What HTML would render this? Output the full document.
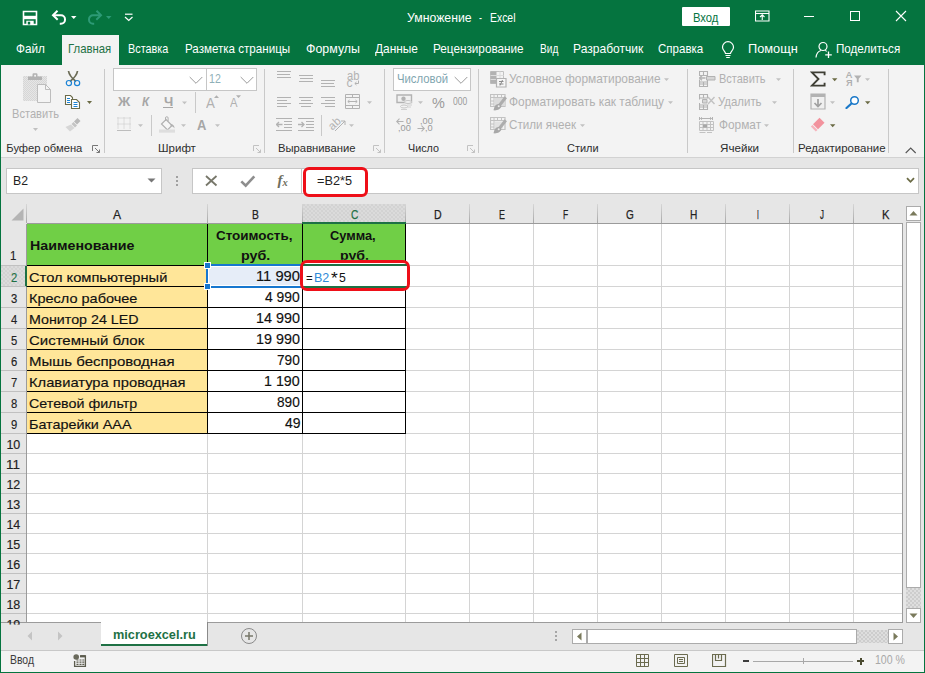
<!DOCTYPE html>
<html lang="ru"><head><meta charset="utf-8"><title>Умножение - Excel</title>
<style>
html,body{margin:0;padding:0;background:#fff;}
body{width:925px;height:673px;overflow:hidden;font-family:"Liberation Sans",sans-serif;}
#win{position:relative;width:925px;height:673px;overflow:hidden;background:#e6e6e6;}
#win div,#win svg,#win span{position:absolute;box-sizing:border-box;}
.t{white-space:pre;line-height:1;transform-origin:0 0;font-family:"Liberation Sans",sans-serif;}
.g{background:#05743f;}
.sep{width:1px;background:#c9c9c9;}
.box{background:#fff;border:1px solid #c6c6c6;}
.vl{width:1px;background:#d4d4d4;top:224px;height:398px;}
.hl{height:1px;background:#d4d4d4;left:27px;width:875px;}
.hs{width:1px;background:linear-gradient(#d6d6d6,#a8a8a8);top:204px;height:19px;}
.rs{height:1px;background:#c0c0c0;left:1px;width:25px;}
.bk{background:#000;}
.dot{background-color:#dbdbdb;background-image:radial-gradient(circle at 1px 1px,#cecece 0.6px,transparent 0.9px),radial-gradient(circle at 3px 3px,#cecece 0.6px,transparent 0.9px);background-size:4px 4px;}
.hatch{background-color:#dedede;background-image:radial-gradient(circle at 1px 1px,#cdcdcd 0.7px,transparent 1px),radial-gradient(circle at 3px 3px,#cdcdcd 0.7px,transparent 1px);background-size:4px 4px;}

</style></head>
<body>
<div id="win">
<!-- title + tab strip -->
<div class="g" style="left:0;top:0;width:925px;height:65px;"></div>
<div style="left:62px;top:35px;width:57px;height:31px;background:#f3f3f3;"></div>
<div style="left:682px;top:7px;width:48px;height:19px;background:#fff;border-radius:1px;"></div>
<!-- ribbon -->
<div style="left:1px;top:65px;width:923px;height:92px;background:#f3f3f3;"></div>
<div style="left:1px;top:157px;width:923px;height:1px;background:#d2d2d2;"></div>
<!-- window borders -->
<div class="g" style="left:0;top:0;width:1px;height:673px;"></div>
<div class="g" style="left:924px;top:0;width:1px;height:673px;"></div>
<div class="g" style="left:0;top:672px;width:925px;height:1px;"></div>
<!-- QAT -->
<svg style="left:22px;top:10px" width="16" height="16" viewBox="0 0 16 16"><path d="M1.500 1.500h13v13h-13z" fill="none" stroke="#fff" stroke-width="1.600"/><path d="M1.500 5.800h13v3.400h-13z" fill="#fff"/><path d="M4.300 10.800h7.400v3.700h-7.400z" fill="#fff"/><path d="M5.800 11.800h2.400v2.700h-2.400z" fill="#05743f"/></svg>
<svg style="left:51px;top:9px" width="17" height="16" viewBox="0 0 17 16"><path d="M6.500 1.800L2 6.300l4.700 4.500" fill="none" stroke="#fff" stroke-width="2"/><path d="M2.500 6.300h7.500a4 4 0 0 1 4 4v0.400a4 4 0 0 1-4 4h-1.200" fill="none" stroke="#fff" stroke-width="2"/></svg>
<svg style="left:71px;top:16px" width="6" height="4"><path d="M0 0h5.500l-2.750 3z" fill="#fff"/></svg>
<svg style="left:86px;top:9px" width="17" height="16" viewBox="0 0 17 16"><path d="M10.500 1.800L15 6.300l-4.700 4.500" fill="none" stroke="#2d9a76" stroke-width="2"/><path d="M14.500 6.300h-7.500a4 4 0 0 0-4 4v0.400a4 4 0 0 0 4 4h1.200" fill="none" stroke="#2d9a76" stroke-width="2"/></svg>
<svg style="left:106px;top:16px" width="6" height="4"><path d="M0 0h5.500l-2.750 3z" fill="#2d9a76"/></svg>
<svg style="left:124px;top:13px" width="10" height="9"><path d="M1 1.200h7.500" stroke="#fff" stroke-width="1.200"/><path d="M1 4l3.750 3.500l3.750-3.500" fill="none" stroke="#fff" stroke-width="1.200"/></svg>
<!-- window controls -->
<svg style="left:755px;top:10px" width="15" height="12"><path d="M0.500 1h13.500v10h-13.500z" fill="none" stroke="#fff" stroke-width="1.100"/><path d="M0.500 3.500h13.500" stroke="#fff" stroke-width="1.100"/><path d="M7.250 10v-5M5 7l2.250-2.200l2.250 2.200" fill="none" stroke="#fff" stroke-width="1.100"/></svg>
<div style="left:804px;top:16px;width:10px;height:1px;background:#fff;"></div>
<div style="left:850px;top:11px;width:10px;height:10px;border:1px solid #fff;"></div>
<svg style="left:895px;top:10px" width="12" height="12"><path d="M1 1l10 10M11 1l-10 10" stroke="#fff" stroke-width="1.100"/></svg>
<!-- bulb + share -->
<svg style="left:721px;top:41px" width="14" height="18" viewBox="0 0 14 18"><path d="M4.500 12.500c0-2-3-3-3-6.300a5.500 5.500 0 0 1 11 0c0 3.300-3 4.300-3 6.300z" fill="none" stroke="#fff" stroke-width="1.200"/><path d="M4.500 14.500h5M5.200 16.500h3.600" stroke="#fff" stroke-width="1.200"/></svg>
<svg style="left:815px;top:41px" width="18" height="18" viewBox="0 0 18 18"><circle cx="8" cy="5.500" r="4" fill="none" stroke="#fff" stroke-width="1.200"/><path d="M1 16.500c0.500-4.500 3-6.500 5-7M10 9.500c0.700 0.200 1.300 0.500 1.800 0.900" fill="none" stroke="#fff" stroke-width="1.200"/><path d="M13.500 10.500v6.500M10.200 13.800h6.600" stroke="#fff" stroke-width="1.300"/></svg>
<!-- clipboard group -->
<svg style="left:22px;top:72px" width="30" height="32" viewBox="0 0 30 32"><defs><pattern id="hx" width="2" height="2" patternUnits="userSpaceOnUse"><rect width="2" height="2" fill="#e6e6e6"/><rect width="1" height="1" fill="#d6d6d6"/><rect x="1" y="1" width="1" height="1" fill="#d6d6d6"/></pattern></defs><rect x="1" y="4" width="24" height="25" fill="url(#hx)"/><path d="M6 8v-3.500h4.500v-2a1.200 1.200 0 0 1 1.200-1.200h2.600a1.200 1.200 0 0 1 1.200 1.200v2h4.500v3.500z" fill="#b3b3b3"/><rect x="12.200" y="2.800" width="1.800" height="1.800" fill="#f3f3f3"/><path d="M15.500 12.500h8l5 5v13h-13z" fill="#f4f4f4" stroke="#bdbdbd" stroke-width="1"/><path d="M23.500 12.500v5h5" fill="none" stroke="#bdbdbd" stroke-width="1"/></svg>
<svg style="left:33px;top:128px" width="6" height="4"><path d="M0 0h5l-2.500 3z" fill="#c0c0c0"/></svg>
<svg style="left:65px;top:70px" width="16" height="17" viewBox="0 0 16 17"><path d="M3.500 1c0.500 3.500 2.500 6.500 7.500 10.500M12.500 1c-0.500 3.500-2.500 6.500-7.500 10.500" fill="none" stroke="#6b6b55" stroke-width="1.700"/><circle cx="3.900" cy="13.100" r="2.600" fill="none" stroke="#1c84d6" stroke-width="1.200"/><circle cx="12.100" cy="13.100" r="2.600" fill="none" stroke="#1c84d6" stroke-width="1.200"/></svg>
<svg style="left:64px;top:94px" width="17" height="16" viewBox="0 0 17 16"><path d="M1.500 1.500h5l2 2v7h-7z" fill="#fff" stroke="#6b6b4a" stroke-width="1.100"/><path d="M3 4.500h3M3 6.500h3M3 8.500h3" stroke="#1c84d6" stroke-width="1"/><path d="M7.500 5.500h5l3 3v6h-8z" fill="#fff" stroke="#6b6b4a" stroke-width="1.100"/><path d="M9.500 8.500h4M9.500 10.500h4M9.500 12.500h4" stroke="#1c84d6" stroke-width="1"/></svg>
<svg style="left:87px;top:101px" width="6" height="4"><path d="M0 0h5l-2.500 3z" fill="#6b6b45"/></svg>
<svg style="left:65px;top:117px" width="17" height="15" viewBox="0 0 17 15"><path d="M12.500 1l3 3-3.500 3.500-3-3z" fill="#b9b9b9"/><path d="M8.500 5l3.500 3.500-2 2-3.500-3.500z" fill="#c4c4c4"/><path d="M6 7.500l3.500 3.500-4.500 3.500-4.500-4.500z" fill="#d6d6d6"/></svg>
<svg style="left:92px;top:145px" width="9" height="9" viewBox="0 0 9 9"><path d="M0.500 6v-5.500h5.500" fill="none" stroke="#777" stroke-width="1"/><path d="M3 3l4.500 4.500M7.500 4.500v3h-3" fill="none" stroke="#777" stroke-width="1"/></svg>
<div class="sep" style="left:104px;top:69px;height:84px;"></div>
<!-- font group -->
<div class="box" style="left:113px;top:68px;width:94px;height:23px;"></div>
<div class="box" style="left:206px;top:68px;width:51px;height:23px;"></div>
<svg style="left:189px;top:76px" width="15" height="9"><path d="M0.700 1l6.300 6.300l6.300-6.300" fill="none" stroke="#9a9a9a" stroke-width="1"/></svg>
<svg style="left:240px;top:76px" width="15" height="9"><path d="M0.700 1l6.300 6.300l6.300-6.300" fill="none" stroke="#9a9a9a" stroke-width="1"/></svg>
<div style="left:163px;top:107px;width:10px;height:1px;background:#a6a6a6;"></div>
<svg style="left:182px;top:101px" width="6" height="4"><path d="M0 0.500h5l-2.500 2.800z" fill="#c2c2c2"/></svg>
<div class="sep" style="left:195px;top:92px;height:21px;"></div>
<svg style="left:214px;top:95px" width="6" height="4"><path d="M0 3h5l-2.500-2.800z" fill="#b0b0b0"/></svg>
<svg style="left:236px;top:95px" width="6" height="4"><path d="M0 0.200h5l-2.500 2.800z" fill="#b0b0b0"/></svg>
<svg style="left:117px;top:117px" width="14" height="15" viewBox="0 0 14 15"><path d="M0.500 1h13M0.500 7h13M1 0.500v12M7 0.500v12M13 0.500v12" fill="none" stroke="#c4c4c4" stroke-width="1" stroke-dasharray="1 1"/><path d="M0 13.500h14" stroke="#bdbdbd" stroke-width="1"/></svg>
<svg style="left:138px;top:124px" width="6" height="4"><path d="M0 0.200h5l-2.500 2.800z" fill="#c2c2c2"/></svg>
<div class="sep" style="left:151px;top:115px;height:21px;"></div>
<svg style="left:159px;top:116px" width="17" height="18" viewBox="0 0 17 18"><path d="M7 3.500l6 6-4.500 4.500-6-6z" fill="#f6f6f6" stroke="#b0b0b0" stroke-width="1.200"/><path d="M6.500 5v-3a1.300 1.300 0 0 1 2.600 0v3" fill="none" stroke="#b0b0b0" stroke-width="1"/><path d="M12 8c2.500 0.500 3.500 2 3.500 4.500c-1-1.500-2-2.500-4-2.500z" fill="#b0b0b0"/><rect x="0" y="13.500" width="16" height="3.200" fill="#dedede"/></svg>
<svg style="left:181px;top:124px" width="6" height="4"><path d="M0 0.200h5l-2.500 2.800z" fill="#c2c2c2"/></svg>
<svg style="left:215px;top:124px" width="6" height="4"><path d="M0 0.200h5l-2.500 2.800z" fill="#c2c2c2"/></svg>
<svg style="left:253px;top:145px" width="9" height="9" viewBox="0 0 9 9"><path d="M0.500 6v-5.500h5.500" fill="none" stroke="#c2c2c2" stroke-width="1"/><path d="M3 3l4.500 4.500M7.500 4.500v3h-3" fill="none" stroke="#c2c2c2" stroke-width="1"/></svg>
<div class="sep" style="left:264px;top:69px;height:84px;"></div>
<!-- alignment group -->
<div style="left:277px;top:71px;width:14px;height:1px;background:#b2b2b2;"></div><div style="left:277px;top:74px;width:13px;height:1px;background:#b2b2b2;"></div><div style="left:277px;top:77px;width:14px;height:1px;background:#b2b2b2;"></div>
<div style="left:299px;top:75px;width:14px;height:1px;background:#b2b2b2;"></div><div style="left:299.5px;top:78px;width:13px;height:1px;background:#b2b2b2;"></div><div style="left:299px;top:81px;width:14px;height:1px;background:#b2b2b2;"></div>
<div style="left:321px;top:80px;width:14px;height:1px;background:#b2b2b2;"></div><div style="left:321px;top:83px;width:13px;height:1px;background:#b2b2b2;"></div><div style="left:321px;top:86px;width:14px;height:1px;background:#b2b2b2;"></div>
<div style="left:277px;top:97px;width:14px;height:1px;background:#b2b2b2;"></div><div style="left:277px;top:100px;width:10px;height:1px;background:#b2b2b2;"></div><div style="left:277px;top:103px;width:14px;height:1px;background:#b2b2b2;"></div><div style="left:277px;top:106px;width:10px;height:1px;background:#b2b2b2;"></div>
<div style="left:299px;top:97px;width:14px;height:1px;background:#b2b2b2;"></div><div style="left:301px;top:100px;width:10px;height:1px;background:#b2b2b2;"></div><div style="left:299px;top:103px;width:14px;height:1px;background:#b2b2b2;"></div><div style="left:301px;top:106px;width:10px;height:1px;background:#b2b2b2;"></div>
<div style="left:321px;top:97px;width:14px;height:1px;background:#b2b2b2;"></div><div style="left:325px;top:100px;width:10px;height:1px;background:#b2b2b2;"></div><div style="left:321px;top:103px;width:14px;height:1px;background:#b2b2b2;"></div><div style="left:325px;top:106px;width:10px;height:1px;background:#b2b2b2;"></div>
<span class="t" style="left:346.500px;top:69.500px;font-size:12px;color:#b2b2b2;transform:scaleX(.93)">ab</span>
<span class="t" style="left:346.500px;top:77.300px;font-size:12px;color:#b2b2b2;">c</span>
<svg style="left:354px;top:80px" width="6" height="6"><path d="M4.500 0.500v3h-3.500M2.500 2l-1.700 1.500l1.700 1.500" fill="none" stroke="#b2b2b2" stroke-width="1"/></svg>
<svg style="left:345px;top:94px" width="16" height="15" viewBox="0 0 16 15"><path d="M0.500 0.500h14v14h-14zM0.500 3.500h14M0.500 11.500h14M7.500 0.500v3M7.500 11.500v3" fill="none" stroke="#b2b2b2" stroke-width="1"/><path d="M3 7.500h9M4.500 6l-1.700 1.500l1.700 1.500M10.500 6l1.700 1.500l-1.700 1.500" fill="none" stroke="#b2b2b2" stroke-width="1"/></svg>
<svg style="left:367px;top:101px" width="6" height="4"><path d="M0 0.200h5l-2.500 2.800z" fill="#c2c2c2"/></svg>
<svg style="left:276px;top:118px" width="16" height="13" viewBox="0 0 16 13"><path d="M0 0.500h16M0 12.500h16M8 3.500h8M8 6.500h8M8 9.500h8" stroke="#b2b2b2" stroke-width="1"/><path d="M0.500 6.500h6M3 4l-2.500 2.500l2.500 2.500" fill="none" stroke="#b2b2b2" stroke-width="1.300"/></svg>
<svg style="left:298px;top:118px" width="16" height="13" viewBox="0 0 16 13"><path d="M0 0.500h16M0 12.500h16M8 3.500h8M8 6.500h8M8 9.500h8" stroke="#b2b2b2" stroke-width="1"/><path d="M0 6.500h6M3.500 4l2.500 2.500l-2.500 2.500" fill="none" stroke="#b2b2b2" stroke-width="1.300"/></svg>
<div class="sep" style="left:321px;top:115px;height:21px;"></div>
<span class="t" style="left:333.500px;top:120.500px;font-size:11.500px;color:#b2b2b2;transform:rotate(-42deg);transform-origin:0 100%;">ab</span>
<svg style="left:334px;top:120px" width="12" height="12"><path d="M1 11l10-10M7 1h4v4" fill="none" stroke="#b2b2b2" stroke-width="1"/></svg>
<svg style="left:349px;top:124px" width="6" height="4"><path d="M0 0.200h5l-2.500 2.800z" fill="#c2c2c2"/></svg>
<svg style="left:373px;top:145px" width="9" height="9" viewBox="0 0 9 9"><path d="M0.500 6v-5.500h5.500" fill="none" stroke="#c2c2c2" stroke-width="1"/><path d="M3 3l4.500 4.500M7.500 4.500v3h-3" fill="none" stroke="#c2c2c2" stroke-width="1"/></svg>
<div class="sep" style="left:384px;top:69px;height:84px;"></div>
<!-- number group -->
<div class="box" style="left:393px;top:68px;width:78px;height:23px;"></div>
<svg style="left:454px;top:76px" width="15" height="9"><path d="M0.700 1l6.300 6.300l6.300-6.300" fill="none" stroke="#9a9a9a" stroke-width="1"/></svg>
<svg style="left:396px;top:94px" width="17" height="16" viewBox="0 0 17 16"><path d="M1 1h14.500v7.500h-14.500z" fill="#f0f0f0" stroke="#b2b2b2" stroke-width="1.400"/><circle cx="7.500" cy="4.700" r="2.200" fill="#b2b2b2"/><ellipse cx="12" cy="8" rx="3.500" ry="1.500" fill="#f3f3f3" stroke="#c6c6c6" stroke-width="1"/><ellipse cx="8" cy="12.500" rx="3.500" ry="1.500" fill="#f3f3f3" stroke="#c6c6c6" stroke-width="1"/><path d="M11 11h5M11 13h4M5 15.500h6" stroke="#d0d0d0" stroke-width="1"/></svg>
<svg style="left:418px;top:101px" width="6" height="4"><path d="M0 0.200h5l-2.500 2.800z" fill="#c2c2c2"/></svg>
<svg style="left:396px;top:118px" width="8" height="7"><path d="M0.500 3.500h7M3.500 0.700l-2.800 2.800l2.800 2.800" fill="none" stroke="#b2b2b2" stroke-width="1.100"/></svg>
<span class="t" style="left:405.5px;top:117px;font-size:8.500px;color:#9a9a9a;transform:scaleX(1.08);">0</span>
<span class="t" style="left:397.5px;top:124.2px;font-size:8.500px;color:#9a9a9a;transform:scaleX(1.08);">,00</span>
<span class="t" style="left:419.5px;top:117px;font-size:8.500px;color:#9a9a9a;transform:scaleX(1.08);">,00</span>
<svg style="left:417px;top:125px" width="8" height="7"><path d="M0.500 3.500h7M4.500 0.700l2.800 2.800l-2.800 2.800" fill="none" stroke="#b2b2b2" stroke-width="1.100"/></svg>
<span class="t" style="left:425px;top:124.2px;font-size:8.500px;color:#9a9a9a;transform:scaleX(1.08);">,0</span>
<svg style="left:467px;top:145px" width="9" height="9" viewBox="0 0 9 9"><path d="M0.500 6v-5.500h5.500" fill="none" stroke="#c2c2c2" stroke-width="1"/><path d="M3 3l4.500 4.500M7.500 4.500v3h-3" fill="none" stroke="#c2c2c2" stroke-width="1"/></svg>
<div class="sep" style="left:478px;top:69px;height:84px;"></div>
<!-- styles group -->
<svg style="left:490px;top:71px" width="17" height="17" viewBox="0 0 17 17"><path d="M0.500 0.500h13v12h-13z" fill="#f3f3f3" stroke="#c2c2c2" stroke-width="1"/><path d="M0.500 0.500h6v12h-6z" fill="#b2b2b2"/><path d="M0.500 4.500h13M0.500 8.500h13M10 0.500v12" stroke="#dcdcdc" stroke-width="1"/><path d="M6.500 7.500h9.500v8.500h-9.500z" fill="#f6f6f6" stroke="#b2b2b2" stroke-width="1.200"/><path d="M9 10.500h4.500M9 13h4.500M12.500 9l-2.500 5.500" stroke="#8c8c8c" stroke-width="1"/></svg>
<svg style="left:490px;top:94px" width="17" height="17" viewBox="0 0 17 17"><path d="M0.500 0.500h14.500v12h-14.500z" fill="#f3f3f3" stroke="#c2c2c2" stroke-width="1.200"/><path d="M0.500 3.500h14.500M0.500 7h3.500M0.500 10h3.500M4 0.500v12M7.500 0.500v3M11.500 0.500v3" stroke="#c2c2c2" stroke-width="1"/><path d="M4.500 4h10.500v8h-10.500z" fill="#dcdcdc"/><path d="M15.800 3.200l-6.300 8" stroke="#adadad" stroke-width="3" fill="none"/><path d="M9.800 10.300c-3-1.200-5.300 0.800-6.300 6c3.200 0.500 7.500-1 8-4.200z" fill="#a8a8a8"/><circle cx="8.700" cy="12.200" r="1" fill="#ececec"/></svg>
<svg style="left:490px;top:117px" width="17" height="17" viewBox="0 0 17 17"><path d="M0.500 0.500h14.500v12h-14.500z" fill="#f3f3f3" stroke="#c2c2c2" stroke-width="1.200"/><path d="M0.500 3.500h14.500M0.500 7h3.500M0.500 10h3.500M4 0.500v12M7.500 0.500v3M11.500 0.500v3" stroke="#c2c2c2" stroke-width="1"/><path d="M5 4.500h8v7h-8z" fill="#e2e2e2"/><path d="M15.800 3.200l-6.300 8" stroke="#adadad" stroke-width="3" fill="none"/><path d="M9.800 10.300c-3-1.200-5.300 0.800-6.300 6c3.200 0.500 7.500-1 8-4.200z" fill="#a8a8a8"/><circle cx="8.700" cy="12.200" r="1" fill="#ececec"/></svg>
<svg style="left:664px;top:78px" width="6" height="4"><path d="M0 0.200h5l-2.500 2.800z" fill="#c2c2c2"/></svg>
<svg style="left:668px;top:101px" width="6" height="4"><path d="M0 0.200h5l-2.500 2.800z" fill="#c2c2c2"/></svg>
<svg style="left:580px;top:124px" width="6" height="4"><path d="M0 0.200h5l-2.500 2.800z" fill="#c2c2c2"/></svg>
<div class="sep" style="left:687px;top:69px;height:84px;"></div>
<!-- cells group -->
<svg style="left:699px;top:71px" width="17" height="16" viewBox="0 0 17 16"><path d="M0.500 0.500h8v4h-8zM4.500 0.500v4M0.500 11h8v4.500h-8zM0.500 13h8M4.500 11v4.500M0.500 8.500v2.500M8.500 8.500v2.500" fill="none" stroke="#b2b2b2" stroke-width="1.100"/><path d="M7.500 5.500h8.500v3.500h-8.500z" fill="#d6d6d6" stroke="#b2b2b2" stroke-width="1"/><path d="M0.500 7h6M3 4.800l-2.500 2.200l2.500 2.200" fill="none" stroke="#b2b2b2" stroke-width="1.300"/></svg>
<svg style="left:699px;top:94px" width="17" height="16" viewBox="0 0 17 16"><path d="M0.500 0.500h8v3.500h-8zM4.500 0.500v3.500M0.500 11h8v4.500h-8zM0.500 13h8M4.500 11v4.500M0.500 9v2M0.500 4v1.500" fill="none" stroke="#b2b2b2" stroke-width="1.100"/><path d="M3.500 5.500h4.500v3.500h-4.500z" fill="#d6d6d6" stroke="#b2b2b2" stroke-width="1"/><path d="M9 3l6.500 7M15.500 3l-6.500 7" stroke="#c2c2c2" stroke-width="1.400"/></svg>
<svg style="left:699px;top:117px" width="16" height="16" viewBox="0 0 16 16"><path d="M0.500 0v3M13.500 0v3M1.500 1.500h11M3 0.300l-1.500 1.200l1.500 1.200M11 0.300l1.500 1.200l-1.500 1.200" fill="none" stroke="#b2b2b2" stroke-width="1"/><path d="M0.500 4.500h14v9h-14zM0.500 7.500h14M0.500 10.500h14M4 4.500v9M8 4.500v9M11.500 4.500v9" fill="none" stroke="#c2c2c2" stroke-width="1"/><path d="M4 7.500h4v3h-4z" fill="#a8a8a8"/><path d="M0.500 15.500h6M8 15.500h5" stroke="#c2c2c2" stroke-width="1"/></svg>
<svg style="left:776px;top:78px" width="6" height="4"><path d="M0 0.200h5l-2.500 2.800z" fill="#c2c2c2"/></svg>
<svg style="left:772px;top:101px" width="6" height="4"><path d="M0 0.200h5l-2.500 2.800z" fill="#c2c2c2"/></svg>
<svg style="left:764px;top:124px" width="6" height="4"><path d="M0 0.200h5l-2.500 2.800z" fill="#c2c2c2"/></svg>
<div class="sep" style="left:793px;top:69px;height:84px;"></div>
<!-- editing group -->
<svg style="left:809.500px;top:70.500px" width="16" height="16" viewBox="0 0 17 17"><path d="M15.500 4.500v-3h-13.500l7 7l-7 7h13.500v-3" fill="none" stroke="#3f3f35" stroke-width="2"/></svg>
<svg style="left:832px;top:78px" width="6" height="4"><path d="M0 0.200h5.400l-2.700 3z" fill="#6b6b45"/></svg>
<span class="t" style="left:846px;top:70.500px;font-size:9px;color:#a6a6a6;-webkit-text-stroke:0.2px;">А</span><span class="t" style="left:846px;top:79px;font-size:9px;color:#a6a6a6;-webkit-text-stroke:0.2px;">Я</span>
<svg style="left:854px;top:75px" width="8" height="8"><path d="M0 0.500h7.500l-2.800 3.200v3.500h-1.900v-3.500z" fill="#b2b2b2"/></svg>
<svg style="left:865px;top:78px" width="6" height="4"><path d="M0 0.200h5l-2.500 2.800z" fill="#c2c2c2"/></svg>
<svg style="left:810px;top:93px" width="16" height="17" viewBox="0 0 16 17"><path d="M1 1h14v15h-14z" fill="#f0f0f0" stroke="#b2b2b2" stroke-width="1.200"/><path d="M1 1h14v3h-14z" fill="#b2b2b2"/><path d="M8 6v7M4.500 10l3.500 3.500l3.500-3.500" fill="none" stroke="#a0a0a0" stroke-width="1.700"/></svg>
<svg style="left:830px;top:101px" width="6" height="4"><path d="M0 0.200h5l-2.500 2.800z" fill="#c2c2c2"/></svg>
<svg style="left:845px;top:95px" width="15" height="14" viewBox="0 0 15 14"><circle cx="9.500" cy="5.500" r="3.800" fill="#fff" stroke="#1a78c8" stroke-width="1.500"/><path d="M6.500 8.500l-5 4.500" stroke="#1a78c8" stroke-width="2.200" stroke-linecap="round"/></svg>
<svg style="left:865px;top:101px" width="6" height="4"><path d="M0 0.200h5.400l-2.700 3z" fill="#6b6b45"/></svg>
<svg style="left:810px;top:117px" width="16" height="15" viewBox="0 0 16 15"><path d="M9.500 0.800l5 5-6.500 6.500-5-5z" fill="#f2929d"/><path d="M2.500 8l5 5-1.700 1.500-5-5z" fill="#f6b3bb"/></svg>
<svg style="left:830px;top:124px" width="6" height="4"><path d="M0 0.200h5.400l-2.700 3z" fill="#6b6b45"/></svg>
<div class="sep" style="left:888px;top:69px;height:84px;"></div>
<svg style="left:905px;top:147px" width="12" height="7"><path d="M0.700 6l5-5l5 5" fill="none" stroke="#555" stroke-width="1.100"/></svg>
<!-- formula bar -->
<div class="box" style="left:6px;top:168px;width:156px;height:26px;"></div>
<svg style="left:147px;top:178px" width="9" height="5"><path d="M0.5 0.5h8l-4 4z" fill="#777"/></svg>
<div style="left:176px;top:176px;width:2px;height:2px;background:#a0a0a0;"></div><div style="left:176px;top:180px;width:2px;height:2px;background:#a0a0a0;"></div><div style="left:176px;top:184px;width:2px;height:2px;background:#a0a0a0;"></div>
<div class="box" style="left:192px;top:168px;width:110px;height:26px;"></div>
<div class="box" style="left:301px;top:168px;width:618px;height:26px;"></div>
<svg style="left:205px;top:175px" width="13" height="12"><path d="M1 1l10.5 9.5M11.500 1l-10.500 9.500" stroke="#77776a" stroke-width="1.800" fill="none"/></svg>
<svg style="left:240px;top:175px" width="16" height="13"><path d="M1.300 6.300l4.400 4.400l8.600-9.300" stroke="#8e8e8e" stroke-width="2.600" fill="none"/></svg>
<span class="t" style="left:277.500px;top:172.500px;font-family:'Liberation Serif',serif;font-style:italic;font-weight:bold;font-size:15px;color:#6e6e60;">f</span><span class="t" style="left:282.500px;top:177.500px;font-family:'Liberation Serif',serif;font-style:italic;font-weight:bold;font-size:10.500px;color:#6e6e60;">x</span>
<svg style="left:906px;top:177px" width="9" height="7"><path d="M1 1.200l3.500 3.600l3.500-3.600" stroke="#6b6b45" stroke-width="1.800" fill="none"/></svg>
<div style="left:303px;top:167px;width:65px;height:30px;border:3px solid #ee0f18;border-radius:6px;background:#fff;"></div>
<!-- headers -->
<div style="left:1px;top:204px;width:903px;height:19px;background:#e6e6e6;"></div>
<div class="dot" style="left:303px;top:204px;width:103px;height:19px;"></div>

<svg style="left:11px;top:208px" width="13" height="13"><path d="M12.500 0.500v12h-12z" fill="#b4b4b4"/></svg>
<div class="hs" style="left:26px;"></div>
<div class="hs" style="left:207px;"></div>
<div class="hs" style="left:302px;"></div>
<div class="hs" style="left:405px;"></div>
<div class="hs" style="left:469px;"></div>
<div class="hs" style="left:533px;"></div>
<div class="hs" style="left:597px;"></div>
<div class="hs" style="left:661px;"></div>
<div class="hs" style="left:725px;"></div>
<div class="hs" style="left:789px;"></div>
<div class="hs" style="left:853px;"></div>
<div style="left:27px;top:223px;width:876px;height:1px;background:#9b9b9b;"></div>
<div style="left:27px;top:224px;width:875px;height:398px;background:#fff;"></div>
<div style="left:902px;top:223px;width:1px;height:400px;background:#9b9b9b;"></div>
<div style="left:1px;top:224px;width:26px;height:398px;background:#e6e6e6;"></div>
<div class="dot" style="left:1px;top:266px;width:26px;height:20px;"></div>
<div style="left:26px;top:224px;width:1px;height:398px;background:#9b9b9b;"></div>
<div style="left:25px;top:266px;width:2px;height:21px;background:#1e7145;"></div>
<div class="rs" style="top:265px;"></div>
<div class="hl" style="top:265px;"></div>
<div class="rs" style="top:286px;"></div>
<div class="hl" style="top:286px;"></div>
<div class="rs" style="top:307px;"></div>
<div class="hl" style="top:307px;"></div>
<div class="rs" style="top:328px;"></div>
<div class="hl" style="top:328px;"></div>
<div class="rs" style="top:349px;"></div>
<div class="hl" style="top:349px;"></div>
<div class="rs" style="top:370px;"></div>
<div class="hl" style="top:370px;"></div>
<div class="rs" style="top:391px;"></div>
<div class="hl" style="top:391px;"></div>
<div class="rs" style="top:412px;"></div>
<div class="hl" style="top:412px;"></div>
<div class="rs" style="top:433px;"></div>
<div class="hl" style="top:433px;"></div>
<div class="rs" style="top:453px;"></div>
<div class="hl" style="top:453px;"></div>
<div class="rs" style="top:473px;"></div>
<div class="hl" style="top:473px;"></div>
<div class="rs" style="top:493px;"></div>
<div class="hl" style="top:493px;"></div>
<div class="rs" style="top:513px;"></div>
<div class="hl" style="top:513px;"></div>
<div class="rs" style="top:533px;"></div>
<div class="hl" style="top:533px;"></div>
<div class="rs" style="top:553px;"></div>
<div class="hl" style="top:553px;"></div>
<div class="rs" style="top:573px;"></div>
<div class="hl" style="top:573px;"></div>
<div class="rs" style="top:593px;"></div>
<div class="hl" style="top:593px;"></div>
<div class="rs" style="top:613px;"></div>
<div class="hl" style="top:613px;"></div>
<div class="vl" style="left:207px;"></div>
<div class="vl" style="left:302px;"></div>
<div class="vl" style="left:405px;"></div>
<div class="vl" style="left:469px;"></div>
<div class="vl" style="left:533px;"></div>
<div class="vl" style="left:597px;"></div>
<div class="vl" style="left:661px;"></div>
<div class="vl" style="left:725px;"></div>
<div class="vl" style="left:789px;"></div>
<div class="vl" style="left:853px;"></div>
<!-- table fills -->
<div style="left:27px;top:224px;width:379px;height:42px;background:#70cf46;"></div>
<div style="left:27px;top:266px;width:181px;height:168px;background:#ffe699;"></div>
<div style="left:208px;top:266px;width:94px;height:20px;background:#e4ecf7;"></div>
<div class="bk" style="left:27px;top:265px;width:379px;height:1px;"></div>
<div class="bk" style="left:27px;top:286px;width:379px;height:1px;"></div>
<div class="bk" style="left:27px;top:307px;width:379px;height:1px;"></div>
<div class="bk" style="left:27px;top:328px;width:379px;height:1px;"></div>
<div class="bk" style="left:27px;top:349px;width:379px;height:1px;"></div>
<div class="bk" style="left:27px;top:370px;width:379px;height:1px;"></div>
<div class="bk" style="left:27px;top:391px;width:379px;height:1px;"></div>
<div class="bk" style="left:27px;top:412px;width:379px;height:1px;"></div>
<div class="bk" style="left:27px;top:433px;width:379px;height:1px;"></div>
<div class="bk" style="left:207px;top:224px;width:1px;height:210px;"></div>
<div class="bk" style="left:302px;top:224px;width:1px;height:210px;"></div>
<div class="bk" style="left:405px;top:224px;width:1px;height:210px;"></div>
<div class="bk" style="left:27px;top:224px;width:1px;height:210px;opacity:.0"></div>
<div style="left:302px;top:222px;width:104px;height:2px;background:#1e7145;"></div><!-- selection -->
<div style="left:206px;top:264px;width:97px;height:24px;border:2px solid #1777cf;background:#fff;"></div>
<div style="left:209px;top:267px;width:93px;height:18px;background:#e6edf8;"></div>
<div style="left:204px;top:262px;width:7px;height:7px;background:#1777cf;border:1px solid #fff;"></div>
<div style="left:204px;top:283px;width:7px;height:7px;background:#1777cf;border:1px solid #fff;"></div>
<div style="left:303px;top:262px;width:104px;height:27px;background:#fff;"></div>
<div style="left:303px;top:264px;width:104px;height:2px;background:#1e7145;"></div>
<div style="left:303px;top:286px;width:104px;height:2px;background:#1e7145;"></div>
<div style="left:300px;top:260px;width:110px;height:31px;border:3.500px solid #ee0f18;border-radius:7px;"></div>
<!-- scrollbars -->
<div style="left:904px;top:204px;width:19px;height:419px;background:#e6e6e6;"></div>
<div style="left:906px;top:206px;width:15px;height:15px;background:#fff;border:1px solid #ababab;"></div>
<svg style="left:909px;top:210px" width="9" height="6"><path d="M0.500 5.500h8l-4-4.500z" fill="#7a7a5c"/></svg>
<div style="left:906px;top:222px;width:15px;height:366px;background:#fff;border:1px solid #ababab;"></div>
<div class="hatch" style="left:906px;top:588px;width:15px;height:20px;"></div>
<div style="left:906px;top:608px;width:15px;height:15px;background:#fff;border:1px solid #ababab;"></div>
<svg style="left:909px;top:613px" width="9" height="6"><path d="M0.500 0.500h8l-4 4.500z" fill="#7a7a5c"/></svg>
<div style="left:1px;top:623px;width:923px;height:27px;background:#e6e6e6;"></div><div style="left:1px;top:622px;width:903px;height:1px;background:#e6e6e6;"></div>
<div style="left:1px;top:622px;width:902px;height:1px;background:#9b9b9b;"></div>
<div style="left:101px;top:622px;width:107px;height:24px;background:#fff;"></div>
<div style="left:101px;top:644px;width:107px;height:2px;background:#1e7145;"></div>
<div style="left:207px;top:622px;width:1px;height:24px;background:#8a8a8a;"></div>
<svg style="left:27px;top:631px" width="6" height="10"><path d="M5 0.500v9l-4.500-4.500z" fill="#c4c4c4"/></svg>
<svg style="left:57px;top:631px" width="6" height="10"><path d="M1 0.500v9l4.500-4.500z" fill="#c4c4c4"/></svg>
<svg style="left:240px;top:627px" width="18" height="18"><circle cx="9" cy="9" r="7.500" fill="none" stroke="#8a8a8a" stroke-width="1"/><path d="M5 9h8M9 5v8" stroke="#77776a" stroke-width="1.500"/></svg>
<div style="left:555px;top:631px;width:2px;height:2px;background:#a6a6a6;"></div>
<div style="left:555px;top:635px;width:2px;height:2px;background:#a6a6a6;"></div>
<div style="left:555px;top:639px;width:2px;height:2px;background:#a6a6a6;"></div>
<div style="left:572px;top:629px;width:15px;height:15px;background:#fff;border:1px solid #ababab;"></div>
<svg style="left:576px;top:632px" width="6" height="9"><path d="M5.500 0.500v8l-4.500-4z" fill="#7a7a5c"/></svg>
<div style="left:587px;top:629px;width:270px;height:15px;background:#fff;border:1px solid #ababab;"></div>
<div class="hatch" style="left:857px;top:630px;width:31px;height:13px;"></div>
<div style="left:888px;top:629px;width:15px;height:15px;background:#fff;border:1px solid #ababab;"></div>
<svg style="left:893px;top:632px" width="6" height="9"><path d="M0.500 0.500v8l4.500-4z" fill="#7a7a5c"/></svg>
<!-- status -->
<div style="left:1px;top:650px;width:923px;height:22px;background:#f3f3f3;"></div>
<div style="left:1px;top:650px;width:923px;height:1px;background:#c8c8c8;"></div>
<svg style="left:73px;top:654px" width="14" height="14" viewBox="0 0 14 14"><path d="M1.600 7v5.400h10.800v-10.400h-5" fill="none" stroke="#5c5c4e" stroke-width="1.300"/><rect x="7" y="1.200" width="5.500" height="2.200" fill="#5c5c4e"/><circle cx="3.200" cy="3" r="2.800" fill="#6a6a5c"/><path d="M3.500 6h2M6.500 6h2M9.300 6h2M3.500 8.200h2M6.500 8.200h2M9.300 8.200h2M3.500 10.400h2M6.500 10.400h2M9.300 10.400h2" stroke="#5c5c4e" stroke-width="1.200"/></svg>
<svg style="left:636px;top:654px" width="14" height="14"><path d="M0.500 0.500h12v12h-12zM0.500 4.500h12M0.500 8.500h12M4.500 0.500v12M8.500 0.500v12" fill="none" stroke="#6b6b4f" stroke-width="1"/></svg>
<svg style="left:674px;top:654px" width="15" height="14"><path d="M0.500 0.500h13v12h-13z M3.500 3.500h7v6h-7z M5 5.500h4M5 7.500h4" fill="none" stroke="#6b6b4f" stroke-width="1"/></svg>
<svg style="left:712px;top:654px" width="15" height="14"><path d="M0.500 0.500h13v12h-13z M3.500 0.500v6h6v-6 M6.500 0.500v4" fill="none" stroke="#6b6b4f" stroke-width="1.200"/></svg>
<div style="left:743px;top:660px;width:6px;height:2px;background:#3c3c3c;"></div>
<div style="left:753px;top:661px;width:100px;height:1px;background:#a8a8a8;"></div>
<div style="left:803px;top:658px;width:1px;height:6px;background:#a8a8a8;"></div>
<div style="left:857px;top:660px;width:7px;height:2px;background:#4a4a30;"></div>
<div style="left:859.500px;top:657.500px;width:2px;height:7px;background:#4a4a30;"></div>
<div id="texts">
<span class="t" style="left:407.1px;top:11.5px;font-size:12.3px;color:#fff;transform:scaleX(0.9985);">Умножение</span>
<span class="t" style="left:479.1px;top:11.5px;font-size:12.3px;color:#fff;transform:scaleX(0.7250);">-</span>
<span class="t" style="left:489.8px;top:11.5px;font-size:12.3px;color:#fff;transform:scaleX(0.8467);">Excel</span>
<span class="t" style="left:693.4px;top:11.5px;font-size:12.3px;color:#05743f;transform:scaleX(0.9143);">Вход</span>
<span class="t" style="left:15.7px;top:43.3px;font-size:12.2px;color:#fff;transform:scaleX(0.9633);">Файл</span>
<span class="t" style="left:127.7px;top:43.3px;font-size:12.2px;color:#fff;transform:scaleX(0.8891);">Вставка</span>
<span class="t" style="left:184.7px;top:43.3px;font-size:12.2px;color:#fff;transform:scaleX(0.9505);">Разметка страницы</span>
<span class="t" style="left:305.7px;top:43.3px;font-size:12.2px;color:#fff;transform:scaleX(1.0189);">Формулы</span>
<span class="t" style="left:375.4px;top:43.3px;font-size:12.2px;color:#fff;transform:scaleX(0.9756);">Данные</span>
<span class="t" style="left:433.4px;top:43.3px;font-size:12.2px;color:#fff;transform:scaleX(0.9628);">Рецензирование</span>
<span class="t" style="left:539.6px;top:43.3px;font-size:12.2px;color:#fff;transform:scaleX(0.8304);">Вид</span>
<span class="t" style="left:573.0px;top:43.3px;font-size:12.2px;color:#fff;transform:scaleX(0.9901);">Разработчик</span>
<span class="t" style="left:657.5px;top:43.3px;font-size:12.2px;color:#fff;transform:scaleX(0.9458);">Справка</span>
<span class="t" style="left:747.5px;top:43.3px;font-size:12.2px;color:#fff;transform:scaleX(1.0489);">Помощн</span>
<span class="t" style="left:835.9px;top:43.3px;font-size:12.2px;color:#fff;transform:scaleX(0.9537);">Поделиться</span>
<span class="t" style="left:68.4px;top:43.3px;font-size:12.2px;color:#1e7145;transform:scaleX(0.9326);">Главная</span>
<span class="t" style="left:11.6px;top:107.7px;font-size:12.2px;color:#b1b1b1;transform:scaleX(0.9096);">Вставить</span>
<span class="t" style="left:6.3px;top:143.4px;font-size:11.2px;color:#2e2e2e;transform:scaleX(1.0000);">Буфер обмена</span>
<span class="t" style="left:157.5px;top:143.4px;font-size:11.2px;color:#2e2e2e;transform:scaleX(1.0297);">Шрифт</span>
<span class="t" style="left:277.9px;top:143.4px;font-size:11.2px;color:#2e2e2e;transform:scaleX(1.0065);">Выравнивание</span>
<span class="t" style="left:407.6px;top:143.4px;font-size:11.2px;color:#2e2e2e;transform:scaleX(0.9625);">Число</span>
<span class="t" style="left:567.3px;top:143.4px;font-size:11.2px;color:#2e2e2e;transform:scaleX(0.9813);">Стили</span>
<span class="t" style="left:720.0px;top:143.4px;font-size:11.2px;color:#2e2e2e;transform:scaleX(1.0395);">Ячейки</span>
<span class="t" style="left:797.6px;top:143.4px;font-size:11.2px;color:#2e2e2e;transform:scaleX(1.0271);">Редактирование</span>
<span class="t" style="left:209.4px;top:73.2px;font-size:12.5px;color:#8fb0b8;transform:scaleX(0.8462);">12</span>
<span class="t" style="left:397.0px;top:73.2px;font-size:12.5px;color:#7fa6b0;transform:scaleX(0.9054);">Числовой</span>
<span class="t" style="left:117.9px;top:95.4px;font-size:13px;color:#a6a6a6;font-weight:bold;transform:scaleX(1.0417);">Ж</span>
<span class="t" style="left:141.7px;top:95.4px;font-size:13px;color:#a6a6a6;font-weight:bold;font-style:italic;transform:scaleX(0.8889);">К</span>
<span class="t" style="left:163.5px;top:95.4px;font-size:13px;color:#a6a6a6;font-weight:bold;transform:scaleX(1.0111);">Ч</span>
<span class="t" style="left:206.2px;top:95.7px;font-size:14px;color:#b0b0b0;transform:scaleX(0.9500);">A</span>
<span class="t" style="left:229.5px;top:97.4px;font-size:12px;color:#b0b0b0;transform:scaleX(0.9375);">A</span>
<span class="t" style="left:196.9px;top:117.0px;font-size:15px;color:#a6a6a6;font-weight:bold;transform:scaleX(0.8636);">A</span>
<span class="t" style="left:432.2px;top:95.0px;font-size:15px;color:#9a9a9a;transform:scaleX(0.9615);">%</span>
<span class="t" style="left:452.9px;top:97.0px;font-size:10px;color:#9a9a9a;transform:scaleX(0.8529);">000</span>
<span class="t" style="left:509.3px;top:73.4px;font-size:12.2px;color:#b1b1b1;transform:scaleX(0.9781);">Условное форматирование</span>
<span class="t" style="left:509.3px;top:96.3px;font-size:12.2px;color:#b1b1b1;transform:scaleX(0.9774);">Форматировать как таблицу</span>
<span class="t" style="left:509.3px;top:119.3px;font-size:12.2px;color:#b1b1b1;transform:scaleX(0.9521);">Стили ячеек</span>
<span class="t" style="left:718.8px;top:73.4px;font-size:12.2px;color:#b1b1b1;transform:scaleX(0.9019);">Вставить</span>
<span class="t" style="left:718.0px;top:96.4px;font-size:12.2px;color:#b1b1b1;transform:scaleX(0.9362);">Удалить</span>
<span class="t" style="left:718.6px;top:119.3px;font-size:12.2px;color:#b1b1b1;transform:scaleX(0.9721);">Формат</span>
<span class="t" style="left:13.3px;top:175.0px;font-size:12.5px;color:#222;transform:scaleX(0.9800);">B2</span>
<span class="t" style="left:317.4px;top:175.0px;font-size:12.5px;color:#222;transform:scaleX(1.0171);">=B2*5</span>
<span class="t" style="left:113.0px;top:208.7px;font-size:12.5px;color:#222;transform:scaleX(0.9667);-webkit-text-stroke:0.25px;">A</span>
<span class="t" style="left:252.0px;top:208.7px;font-size:12.5px;color:#222;transform:scaleX(0.8250);-webkit-text-stroke:0.25px;">B</span>
<span class="t" style="left:350.7px;top:208.7px;font-size:12.5px;color:#1e7145;transform:scaleX(0.8111);-webkit-text-stroke:0.25px;">C</span>
<span class="t" style="left:434.0px;top:208.7px;font-size:12.5px;color:#222;transform:scaleX(0.8444);-webkit-text-stroke:0.25px;">D</span>
<span class="t" style="left:498.9px;top:208.7px;font-size:12.5px;color:#222;transform:scaleX(0.7125);-webkit-text-stroke:0.25px;">E</span>
<span class="t" style="left:563.1px;top:208.7px;font-size:12.5px;color:#222;transform:scaleX(0.6750);-webkit-text-stroke:0.25px;">F</span>
<span class="t" style="left:625.8px;top:208.7px;font-size:12.5px;color:#222;transform:scaleX(0.8000);-webkit-text-stroke:0.25px;">G</span>
<span class="t" style="left:690.1px;top:208.7px;font-size:12.5px;color:#222;transform:scaleX(0.8111);-webkit-text-stroke:0.25px;">H</span>
<span class="t" style="left:757.0px;top:208.7px;font-size:12.5px;color:#222;transform:scaleX(0.5333);-webkit-text-stroke:0.25px;">I</span>
<span class="t" style="left:819.9px;top:208.7px;font-size:12.5px;color:#222;transform:scaleX(0.6333);-webkit-text-stroke:0.25px;">J</span>
<span class="t" style="left:882.2px;top:208.7px;font-size:12.5px;color:#222;transform:scaleX(0.9000);-webkit-text-stroke:0.25px;">K</span>
<span class="t" style="left:10.2px;top:249.8px;font-size:12.5px;color:#222;transform:scaleX(0.9167);-webkit-text-stroke:0.15px;">1</span>
<span class="t" style="left:10.8px;top:271.8px;font-size:12.5px;color:#1e7145;transform:scaleX(0.9000);-webkit-text-stroke:0.15px;">2</span>
<span class="t" style="left:10.8px;top:292.8px;font-size:12.5px;color:#222;transform:scaleX(0.9000);-webkit-text-stroke:0.15px;">3</span>
<span class="t" style="left:10.8px;top:313.8px;font-size:12.5px;color:#222;transform:scaleX(0.9000);-webkit-text-stroke:0.15px;">4</span>
<span class="t" style="left:10.8px;top:334.8px;font-size:12.5px;color:#222;transform:scaleX(0.9000);-webkit-text-stroke:0.15px;">5</span>
<span class="t" style="left:10.8px;top:355.8px;font-size:12.5px;color:#222;transform:scaleX(0.9000);-webkit-text-stroke:0.15px;">6</span>
<span class="t" style="left:10.8px;top:376.8px;font-size:12.5px;color:#222;transform:scaleX(0.9000);-webkit-text-stroke:0.15px;">7</span>
<span class="t" style="left:10.8px;top:397.8px;font-size:12.5px;color:#222;transform:scaleX(0.9000);-webkit-text-stroke:0.15px;">8</span>
<span class="t" style="left:10.8px;top:418.8px;font-size:12.5px;color:#222;transform:scaleX(0.9000);-webkit-text-stroke:0.15px;">9</span>
<span class="t" style="left:6.4px;top:439.3px;font-size:12.5px;color:#222;transform:scaleX(1.0000);-webkit-text-stroke:0.15px;">10</span>
<span class="t" style="left:6.3px;top:459.3px;font-size:12.5px;color:#222;transform:scaleX(1.0833);-webkit-text-stroke:0.15px;">11</span>
<span class="t" style="left:6.4px;top:479.3px;font-size:12.5px;color:#222;transform:scaleX(1.0000);-webkit-text-stroke:0.15px;">12</span>
<span class="t" style="left:6.4px;top:499.3px;font-size:12.5px;color:#222;transform:scaleX(1.0000);-webkit-text-stroke:0.15px;">13</span>
<span class="t" style="left:6.4px;top:519.3px;font-size:12.5px;color:#222;transform:scaleX(1.0000);-webkit-text-stroke:0.15px;">14</span>
<span class="t" style="left:6.4px;top:539.3px;font-size:12.5px;color:#222;transform:scaleX(1.0000);-webkit-text-stroke:0.15px;">15</span>
<span class="t" style="left:6.4px;top:559.3px;font-size:12.5px;color:#222;transform:scaleX(1.0000);-webkit-text-stroke:0.15px;">16</span>
<span class="t" style="left:6.4px;top:579.3px;font-size:12.5px;color:#222;transform:scaleX(1.0000);-webkit-text-stroke:0.15px;">17</span>
<span class="t" style="left:6.4px;top:599.3px;font-size:12.5px;color:#222;transform:scaleX(1.0000);-webkit-text-stroke:0.15px;">18</span>
<span class="t" style="left:6.4px;top:619.3px;font-size:12.5px;color:#222;transform:scaleX(1.0000);-webkit-text-stroke:0.15px;clip-path:inset(0 0 7.2px 0);">19</span>
<span class="t" style="left:29.6px;top:239.0px;font-size:13px;color:#111;font-weight:bold;transform:scaleX(1.0948);">Наименование</span>
<span class="t" style="left:216.3px;top:229.0px;font-size:13px;color:#111;font-weight:bold;transform:scaleX(1.0338);">Стоимость,</span>
<span class="t" style="left:240.9px;top:249.0px;font-size:13px;color:#111;font-weight:bold;transform:scaleX(1.1000);">руб.</span>
<span class="t" style="left:329.7px;top:229.0px;font-size:13px;color:#111;font-weight:bold;transform:scaleX(0.9848);">Сумма,</span>
<span class="t" style="left:339.6px;top:249.0px;font-size:13px;color:#111;font-weight:bold;transform:scaleX(1.0846);clip-path:inset(0 0 2.2px 0);">руб.</span>
<span class="t" style="left:305.5px;top:270.6px;font-size:13px;color:#111;transform:scaleX(0.8750);">=</span>
<span class="t" style="left:314.2px;top:270.6px;font-size:13px;color:#2e8ad8;transform:scaleX(0.9625);">B2</span>
<span class="t" style="left:330.5px;top:270.7px;font-size:16px;color:#111;transform:scaleX(1.0833);">*</span>
<span class="t" style="left:338.7px;top:270.6px;font-size:13px;color:#111;transform:scaleX(0.9429);">5</span>
<span class="t" style="left:29.0px;top:271.0px;font-size:13px;color:#111;transform:scaleX(1.1276);-webkit-text-stroke:0.15px #111;">Стол компьютерный</span>
<span class="t" style="left:256.2px;top:270.3px;font-size:13.8px;color:#111;transform:scaleX(1.0675);-webkit-text-stroke:0.15px #111;">11 990</span>
<span class="t" style="left:29.0px;top:292.0px;font-size:13px;color:#111;transform:scaleX(1.1155);-webkit-text-stroke:0.15px #111;">Кресло рабочее</span>
<span class="t" style="left:264.8px;top:291.3px;font-size:13.8px;color:#111;transform:scaleX(1.0057);-webkit-text-stroke:0.15px #111;">4 990</span>
<span class="t" style="left:29.0px;top:313.0px;font-size:13px;color:#111;transform:scaleX(1.0970);-webkit-text-stroke:0.15px #111;">Монитор 24 LED</span>
<span class="t" style="left:256.3px;top:312.3px;font-size:13.8px;color:#111;transform:scaleX(1.0415);-webkit-text-stroke:0.15px #111;">14 990</span>
<span class="t" style="left:29.0px;top:334.0px;font-size:13px;color:#111;transform:scaleX(1.1520);-webkit-text-stroke:0.15px #111;">Системный блок</span>
<span class="t" style="left:256.3px;top:333.3px;font-size:13.8px;color:#111;transform:scaleX(1.0415);-webkit-text-stroke:0.15px #111;">19 990</span>
<span class="t" style="left:29.0px;top:355.0px;font-size:13px;color:#111;transform:scaleX(1.1524);-webkit-text-stroke:0.15px #111;">Мышь беспроводная</span>
<span class="t" style="left:277.3px;top:354.3px;font-size:13.8px;color:#111;transform:scaleX(0.9870);-webkit-text-stroke:0.15px #111;">790</span>
<span class="t" style="left:29.0px;top:376.0px;font-size:13px;color:#111;transform:scaleX(1.1319);-webkit-text-stroke:0.15px #111;">Клавиатура проводная</span>
<span class="t" style="left:263.8px;top:375.3px;font-size:13.8px;color:#111;transform:scaleX(1.0353);-webkit-text-stroke:0.15px #111;">1 190</span>
<span class="t" style="left:29.0px;top:397.0px;font-size:13px;color:#111;transform:scaleX(1.0980);-webkit-text-stroke:0.15px #111;">Сетевой фильтр</span>
<span class="t" style="left:277.3px;top:396.3px;font-size:13.8px;color:#111;transform:scaleX(0.9870);-webkit-text-stroke:0.15px #111;">890</span>
<span class="t" style="left:29.0px;top:418.0px;font-size:13px;color:#111;transform:scaleX(1.1043);-webkit-text-stroke:0.15px #111;">Батарейки ААА</span>
<span class="t" style="left:284.8px;top:417.3px;font-size:13.8px;color:#111;transform:scaleX(1.0133);-webkit-text-stroke:0.15px #111;">49</span>
<span class="t" style="left:113.4px;top:628.4px;font-size:13px;color:#1e7145;font-weight:bold;transform:scaleX(0.9786);">microexcel.ru</span>
<span class="t" style="left:9.7px;top:653.8px;font-size:12px;color:#3c3c3c;transform:scaleX(0.8679);">Ввод</span>
<span class="t" style="left:875.1px;top:654.3px;font-size:12px;color:#a8a8a8;transform:scaleX(0.8788);">100 %</span>
</div>
</div>
</body></html>
